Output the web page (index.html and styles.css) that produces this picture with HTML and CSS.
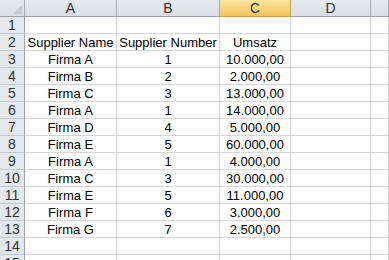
FILE: index.html
```html
<!DOCTYPE html>
<html lang="en">
<head>
  <meta charset="UTF-8">
  <title>Sheet1</title>
  <link rel="stylesheet" href="styles.css">
</head>
<body>
  <div class="sheet">
    <div class="hd corner"><svg class="tri" width="9" height="9" viewBox="0 0 9 9"><polygon points="9,0 9,9 0,9" fill="#c6cbd2"/></svg></div>
    <div class="hd col">A</div>
    <div class="hd col">B</div>
    <div class="hd col sel">C</div>
    <div class="hd col">D</div>
    <div class="hd col"></div>

    <div class="hd row">1</div><div class="c"></div><div class="c"></div><div class="c"></div><div class="c"></div><div class="c"></div>
    <div class="hd row">2</div><div class="c">Supplier Name</div><div class="c">Supplier Number</div><div class="c">Umsatz</div><div class="c"></div><div class="c"></div>
    <div class="hd row">3</div><div class="c">Firma A</div><div class="c">1</div><div class="c">10.000,00</div><div class="c"></div><div class="c"></div>
    <div class="hd row">4</div><div class="c">Firma B</div><div class="c">2</div><div class="c">2.000,00</div><div class="c"></div><div class="c"></div>
    <div class="hd row">5</div><div class="c">Firma C</div><div class="c">3</div><div class="c">13.000,00</div><div class="c"></div><div class="c"></div>
    <div class="hd row">6</div><div class="c">Firma A</div><div class="c">1</div><div class="c">14.000,00</div><div class="c"></div><div class="c"></div>
    <div class="hd row">7</div><div class="c">Firma D</div><div class="c">4</div><div class="c">5.000,00</div><div class="c"></div><div class="c"></div>
    <div class="hd row">8</div><div class="c">Firma E</div><div class="c">5</div><div class="c">60.000,00</div><div class="c"></div><div class="c"></div>
    <div class="hd row">9</div><div class="c">Firma A</div><div class="c">1</div><div class="c">4.000,00</div><div class="c"></div><div class="c"></div>
    <div class="hd row">10</div><div class="c">Firma C</div><div class="c">3</div><div class="c">30.000,00</div><div class="c"></div><div class="c"></div>
    <div class="hd row">11</div><div class="c">Firma E</div><div class="c">5</div><div class="c">11.000,00</div><div class="c"></div><div class="c"></div>
    <div class="hd row">12</div><div class="c">Firma F</div><div class="c">6</div><div class="c">3.000,00</div><div class="c"></div><div class="c"></div>
    <div class="hd row">13</div><div class="c">Firma G</div><div class="c">7</div><div class="c">2.500,00</div><div class="c"></div><div class="c"></div>
    <div class="hd row">14</div><div class="c"></div><div class="c"></div><div class="c"></div><div class="c"></div><div class="c"></div>
    <div class="hd row">15</div><div class="c"></div><div class="c"></div><div class="c"></div><div class="c"></div><div class="c"></div>
  </div>
</body>
</html>
```

FILE: styles.css
```css
html, body {
  margin: 0;
  background: #fff;
  overflow: hidden;
}
.sheet {
  display: grid;
  grid-template-columns: 25px 92px 103px 71px 80px 1fr;
  grid-auto-rows: 17px;
  width: 389px;
  font-family: "Liberation Sans", Arial, sans-serif;
  font-size: 13px;
  color: #000;
}
.c, .hd {
  box-sizing: border-box;
  border-right: 1px solid #d6d6d6;
  border-bottom: 1px solid #d6d6d6;
  text-align: center;
  line-height: 16px;
  padding-top: 1px;
  white-space: nowrap;
  overflow: hidden;
}
.hd {
  background: linear-gradient(#e6e9ee, #dadee4);
  color: #333;
  font-size: 14px;
  padding-top: 0;
}
.col {
  border-right-color: #a4a9b0;
  border-bottom-color: #9da2a9;
}
.row {
  background: #e4e7ec;
  border-right-color: #9da2a9;
  border-bottom-color: #c3c8cf;
}
.corner {
  position: relative;
  border-right-color: #a4a9b0;
  border-bottom-color: #9da2a9;
}
.tri {
  position: absolute;
  right: 2px;
  bottom: 2px;
}
.sel {
  background: linear-gradient(#fce69f, #f4c45f);
  border-right-color: #c9a04f;
  border-bottom-color: #c9a04f;
}
```
